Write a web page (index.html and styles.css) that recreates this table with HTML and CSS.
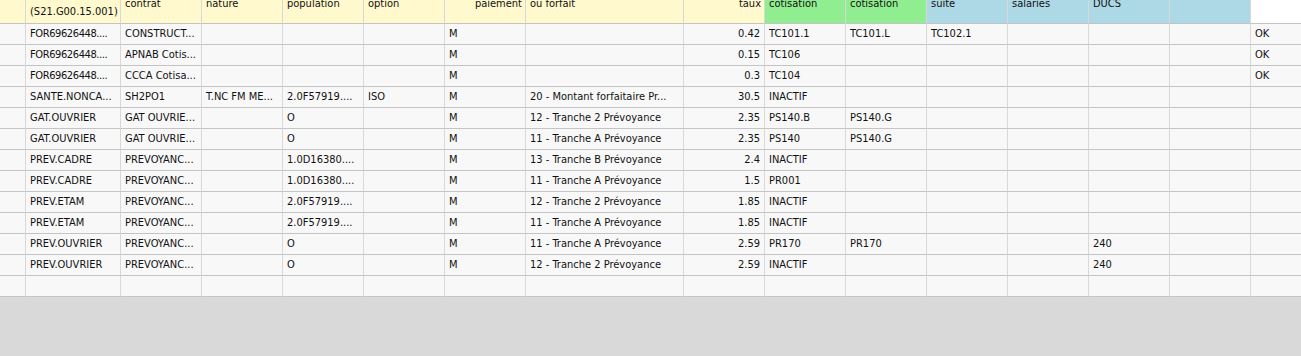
FILE: index.html
```html
<!DOCTYPE html>
<html lang="fr">
<head>
<meta charset="utf-8">
<title>Cotisations</title>
<link rel="stylesheet" href="styles.css">
</head>
<body>
<div class="viewport">
<table class="grid">
<colgroup>
<col class="w-idx"><col class="w-id"><col class="w-std"><col class="w-std"><col class="w-std"><col class="w-std"><col class="w-std"><col class="w-wide"><col class="w-std"><col class="w-std"><col class="w-std"><col class="w-std"><col class="w-std"><col class="w-std"><col class="w-std"><col class="w-std">
</colgroup>
<thead>
<tr>
<th class="h-y"></th>
<th class="h-y"><div class="lbl low">(S21.G00.15.001)</div></th>
<th class="h-y"><div class="lbl">contrat</div></th>
<th class="h-y"><div class="lbl">nature</div></th>
<th class="h-y"><div class="lbl">population</div></th>
<th class="h-y"><div class="lbl">option</div></th>
<th class="h-y r"><div class="lbl">paiement</div></th>
<th class="h-y"><div class="lbl">ou forfait</div></th>
<th class="h-y r"><div class="lbl">taux</div></th>
<th class="h-g"><div class="lbl">cotisation</div></th>
<th class="h-g"><div class="lbl">cotisation</div></th>
<th class="h-b"><div class="lbl">suite</div></th>
<th class="h-b"><div class="lbl">salaries</div></th>
<th class="h-b"><div class="lbl">DUCS</div></th>
<th class="h-b"></th>
<th class="h-w"></th>
</tr>
</thead>
<tbody>
<tr><td></td><td class="id">FOR69626448....</td><td>CONSTRUCT...</td><td></td><td></td><td></td><td>M</td><td></td><td class="r">0.42</td><td>TC101.1</td><td>TC101.L</td><td>TC102.1</td><td></td><td></td><td></td><td>OK</td></tr>
<tr><td></td><td class="id">FOR69626448....</td><td>APNAB Cotis...</td><td></td><td></td><td></td><td>M</td><td></td><td class="r">0.15</td><td>TC106</td><td></td><td></td><td></td><td></td><td></td><td>OK</td></tr>
<tr><td></td><td class="id">FOR69626448....</td><td>CCCA Cotisa...</td><td></td><td></td><td></td><td>M</td><td></td><td class="r">0.3</td><td>TC104</td><td></td><td></td><td></td><td></td><td></td><td>OK</td></tr>
<tr><td></td><td>SANTE.NONCA...</td><td>SH2PO1</td><td>T.NC FM ME...</td><td>2.0F57919....</td><td>ISO</td><td>M</td><td>20 - Montant forfaitaire Pr...</td><td class="r">30.5</td><td>INACTIF</td><td></td><td></td><td></td><td></td><td></td><td></td></tr>
<tr><td></td><td>GAT.OUVRIER</td><td>GAT OUVRIE...</td><td></td><td>O</td><td></td><td>M</td><td>12 - Tranche 2 Prévoyance</td><td class="r">2.35</td><td>PS140.B</td><td>PS140.G</td><td></td><td></td><td></td><td></td><td></td></tr>
<tr><td></td><td>GAT.OUVRIER</td><td>GAT OUVRIE...</td><td></td><td>O</td><td></td><td>M</td><td>11 - Tranche A Prévoyance</td><td class="r">2.35</td><td>PS140</td><td>PS140.G</td><td></td><td></td><td></td><td></td><td></td></tr>
<tr><td></td><td>PREV.CADRE</td><td>PREVOYANC...</td><td></td><td>1.0D16380....</td><td></td><td>M</td><td>13 - Tranche B Prévoyance</td><td class="r">2.4</td><td>INACTIF</td><td></td><td></td><td></td><td></td><td></td><td></td></tr>
<tr><td></td><td>PREV.CADRE</td><td>PREVOYANC...</td><td></td><td>1.0D16380....</td><td></td><td>M</td><td>11 - Tranche A Prévoyance</td><td class="r">1.5</td><td>PR001</td><td></td><td></td><td></td><td></td><td></td><td></td></tr>
<tr><td></td><td>PREV.ETAM</td><td>PREVOYANC...</td><td></td><td>2.0F57919....</td><td></td><td>M</td><td>12 - Tranche 2 Prévoyance</td><td class="r">1.85</td><td>INACTIF</td><td></td><td></td><td></td><td></td><td></td><td></td></tr>
<tr><td></td><td>PREV.ETAM</td><td>PREVOYANC...</td><td></td><td>2.0F57919....</td><td></td><td>M</td><td>11 - Tranche A Prévoyance</td><td class="r">1.85</td><td>INACTIF</td><td></td><td></td><td></td><td></td><td></td><td></td></tr>
<tr><td></td><td>PREV.OUVRIER</td><td>PREVOYANC...</td><td></td><td>O</td><td></td><td>M</td><td>11 - Tranche A Prévoyance</td><td class="r">2.59</td><td>PR170</td><td>PR170</td><td></td><td></td><td>240</td><td></td><td></td></tr>
<tr><td></td><td>PREV.OUVRIER</td><td>PREVOYANC...</td><td></td><td>O</td><td></td><td>M</td><td>12 - Tranche 2 Prévoyance</td><td class="r">2.59</td><td>INACTIF</td><td></td><td></td><td></td><td>240</td><td></td><td></td></tr>
<tr><td></td><td></td><td></td><td></td><td></td><td></td><td></td><td></td><td></td><td></td><td></td><td></td><td></td><td></td><td></td><td></td></tr>
</tbody>
</table>
</div>
</body>
</html>
```

FILE: styles.css
```css
html, body {
  margin: 0;
  padding: 0;
  overflow: hidden;
}
.viewport {
  width: 100vw;
  height: 100vh;
  overflow: hidden;
  background: #d9d9d9;
  font-family: "DejaVu Sans Condensed", "DejaVu Sans", sans-serif;
  font-stretch: condensed;
  font-size: 11px;
  color: #111;
}
.grid {
  table-layout: fixed;
  border-collapse: separate;
  border-spacing: 0;
  width: 1331px;
  background: #f8f8f8;
}
.w-idx { width: 26px; }
.w-id { width: 95px; }
.w-std { width: 81px; }
.w-wide { width: 158px; }

.grid th, .grid td {
  padding: 0 0 0 4px;
  border-right: 1px solid #d8d8d8;
  border-bottom: 1px solid #c4c4c4;
  white-space: nowrap;
  overflow: hidden;
  text-align: left;
  font-weight: normal;
}
.grid td.id {
  letter-spacing: -0.4px;
}
.grid th {
  height: 23px;
  vertical-align: top;
}
.grid td {
  height: 20px;
  line-height: 20px;
  vertical-align: middle;
}
.grid .r { text-align: right; padding-right: 4px; }
.grid th.r { padding-right: 3px; }

.lbl {
  line-height: 13px;
  margin-top: -3px;
}
.lbl.low { margin-top: 5px; }

.h-y { background: #fff9cd; }
.h-g { background: #90ee90; }
.h-b { background: #add8e6; }
.h-w { background: #ffffff; border-right: none !important; }
```
